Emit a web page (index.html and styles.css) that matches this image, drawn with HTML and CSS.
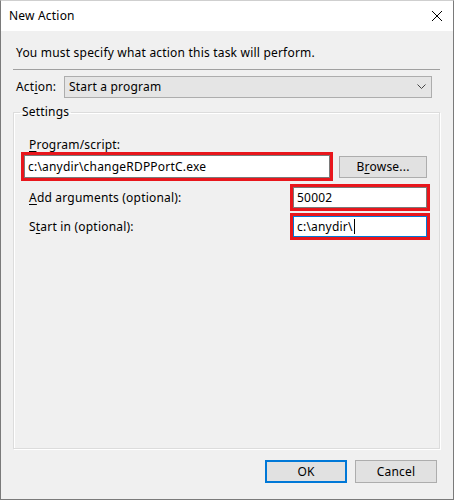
FILE: index.html
```html
<!DOCTYPE html>
<html lang="en">
<head>
<meta charset="utf-8">
<title>New Action</title>
<link rel="stylesheet" href="styles.css">
</head>
<body>
<div class="window">
  <div class="titlebar">
    <span class="title">New Action</span>
    <svg class="close" width="12" height="12" viewBox="0 0 12 12"><path d="M1 1 L11 11 M11 1 L1 11" stroke="#000" stroke-width="1" fill="none"/></svg>
  </div>
  <div class="content">
    <p class="intro">You must specify what action this task will perform.</p>
    <div class="sep"></div>
    <div class="action-row">
      <span class="lbl">Act<u>i</u>on:</span>
      <div class="combo">
        <span>Start a program</span>
        <svg width="9" height="6" viewBox="0 0 9 6"><path d="M0.5 0.5 L4.5 4.5 L8.5 0.5" stroke="#444" stroke-width="1" fill="none"/></svg>
      </div>
    </div>
    <fieldset class="group">
      <legend>Settings</legend>
      <div class="lbl prog-lbl"><u>P</u>rogram/script:</div>
      <div class="prog-row">
        <div class="field hl wide">c:\anydir\changeRDPPortC.exe</div>
        <div class="btn browse">B<u>r</u>owse...</div>
      </div>
      <div class="row args-row">
        <span class="lbl"><u>A</u>dd arguments (optional):</span>
        <div class="field hl narrow">50002</div>
      </div>
      <div class="row start-row">
        <span class="lbl">S<u>t</u>art in (optional):</span>
        <div class="field hl narrow focus">c:\anydir\<span class="caret"></span></div>
      </div>
    </fieldset>
    <div class="footer">
      <div class="btn ok">OK</div>
      <div class="btn">Cancel</div>
    </div>
  </div>
</div>
</body>
</html>
```
FILE: styles.css
```css
html, body {
  margin: 0;
  padding: 0;
  background: #ffffff;
}
body {
  font-family: "Segoe UI", "Noto Sans", "Open Sans", sans-serif;
  font-size: 12px;
  line-height: 16px;
  letter-spacing: 0.2px;
  color: #000;
}
u {
  text-decoration-thickness: 1px;
  text-underline-offset: 2px;
}
.window {
  width: 454px;
  height: 500px;
  box-sizing: border-box;
  border: 1px solid #7a7a7a;
  border-top-color: #cfcfcf;
  display: flex;
  flex-direction: column;
  background: #f0f0f0;
}
.titlebar {
  height: 30px;
  background: #fff;
  display: flex;
  align-items: center;
  justify-content: space-between;
  padding: 0 10px 0 8px;
  flex: none;
}
.close {
  display: block;
}
.content {
  flex: 1;
  display: flex;
  flex-direction: column;
  padding: 14px 13px 16px 12px;
  min-height: 0;
}
.intro {
  margin: 0 0 0 3px;
}
.sep {
  height: 1px;
  background: #a0a0a0;
  margin-top: 8px;
  flex: none;
}
.action-row {
  display: flex;
  align-items: center;
  margin-top: 6px;
  margin-right: 8px;
}
.lbl {
  white-space: nowrap;
}
.action-row .lbl {
  width: 48px;
  padding-left: 3px;
}
.combo {
  flex: 1;
  height: 22px;
  box-sizing: border-box;
  border: 1px solid #adadad;
  background: #e5e5e5;
  display: flex;
  align-items: center;
  justify-content: space-between;
  padding: 0 5px 0 4px;
}
.group {
  margin: 6px 0 0 0;
  padding: 0 12px 0 10px;
  border: 1px solid #dcdcdc;
  box-shadow: inset 1px 1px 0 #fff, 1px 1px 0 #fff;
  flex: 1;
  min-width: 0;
}
.group legend {
  padding: 0 2px;
  margin-left: -4px;
  line-height: 16px;
}
.prog-lbl {
  margin: 17px 0 0 5px;
}
.prog-row {
  display: flex;
  align-items: center;
  margin-top: 2px;
  gap: 9px;
}
.field {
  box-sizing: border-box;
  background: #fff;
  border: 1px solid #7a7a7a;
  display: flex;
  align-items: center;
  padding-left: 3px;
  white-space: nowrap;
}
.hl {
  outline: 3px solid #e8161c;
  outline-offset: 0;
}
.wide {
  width: 306px;
  height: 23px;
}
.narrow {
  width: 134px;
  height: 21px;
}
.focus {
  border-color: #0078d7;
}
.caret {
  display: inline-block;
  width: 1px;
  height: 15px;
  background: #000;
  margin-left: 1px;
}
.btn {
  box-sizing: border-box;
  height: 23px;
  width: 82px;
  border: 1px solid #adadad;
  background: #e1e1e1;
  display: flex;
  align-items: center;
  justify-content: center;
}
.browse {
  width: 88px;
  height: 22px;
}
.row {
  display: flex;
  align-items: center;
  justify-content: space-between;
  padding-left: 5px;
}
.args-row {
  margin-top: 9px;
}
.start-row {
  margin-top: 8px;
}
.footer {
  display: flex;
  justify-content: flex-end;
  gap: 8px;
  margin-top: 11px;
  margin-right: 3px;
}
.ok {
  border: 2px solid #0078d7;
}
```
